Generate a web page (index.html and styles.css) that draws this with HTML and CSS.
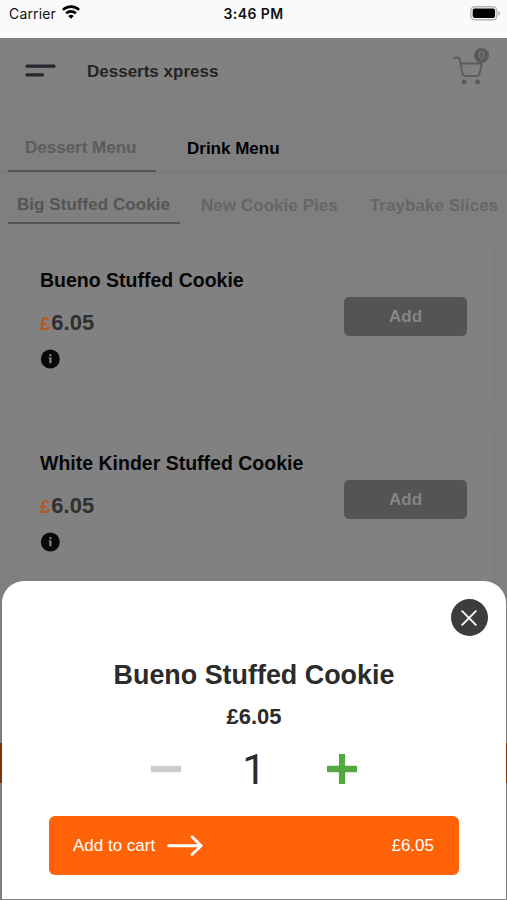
FILE: index.html
```
<!DOCTYPE html>
<html lang="en">
<head>
    <meta charset="UTF-8">
    <title>Desserts xpress</title>
    <link rel="stylesheet" href="styles.css">
</head>
<body>
    <div class="statusbar">
        <div class="carrier">
            <span>Carrier</span>
            <svg width="18" height="14" viewBox="0 0 18 14" fill="none" stroke="#000" stroke-width="2.7">
                <path d="M.9 4.9a11.6 11.6 0 0 1 16.2 0"/>
                <path d="M4.1 8.4a7 7 0 0 1 9.8 0"/>
                <path d="M9 13.8 6.200 11a4 4 0 0 1 5.600 0z" fill="#000" stroke="none"/>
            </svg>
        </div>
        <div class="clock">3:46 PM</div>
        <svg class="battery" width="31" height="15" viewBox="0 0 31 15">
            <rect x=".8" y=".8" width="26" height="13" rx="3.8" fill="#fafafa" stroke="#b5b5b5" stroke-width="1.4"/>
            <rect x="2.7" y="2.6" width="22.4" height="9.4" rx="2" fill="#000"/>
            <path d="M28.3 4.8c2.4 1 2.4 4 0 5z" fill="#b5b5b5"/>
        </svg>
    </div>

    <div class="header">
        <svg class="menu-icon" width="31" height="14" viewBox="0 0 31 14" stroke="#26272e" stroke-width="3.2" stroke-linecap="round">
            <path d="M2 2.2h27M2 10.9h15.500"/>
        </svg>
        <h1>Desserts xpress</h1>
        <div class="cart">
            <svg width="30" height="30" viewBox="0 0 30 30" fill="none" stroke="#5c5c5c" stroke-width="1.900" stroke-linecap="round" stroke-linejoin="round">
                <path d="M1.200 1.700h3.800q1.200 0 1.500 1.200l3.200 15.200q.4 1.900 2.300 1.900h12.300q1.800 0 2.200-1.900l2.200-10.600H7.500"/>
                <circle cx="11.200" cy="26" r="2.500" fill="#5c5c5c" stroke="none"/>
                <circle cx="24.500" cy="26" r="2.500" fill="#5c5c5c" stroke="none"/>
            </svg>
            <span class="badge">0</span>
        </div>
    </div>

    <div class="menus">
        <div class="menu active">Dessert Menu</div>
        <div class="menu">Drink Menu</div>
    </div>
    <div class="categories">
        <div class="category active">Big Stuffed Cookie</div>
        <div class="category">New Cookie Pies</div>
        <div class="category">Traybake Slices</div>
    </div>

    <div class="list">
        <div class="card">
            <div>
                <h2>Bueno Stuffed Cookie</h2>
                <p class="price"><span>£</span>6.05</p>
                <svg class="info" width="20" height="20" viewBox="0 0 20 20">
                    <circle cx="10.300" cy="10" r="9.500" fill="#080808"/>
                    <path d="M9.300 5.300h2.200v2H9.300zM8.700 8.600h2.800v5.700H9.300V9.800h-.6z" fill="#858585"/>
                </svg>
            </div>
            <button class="add">Add</button>
        </div>
        <div class="card">
            <div>
                <h2>White Kinder Stuffed Cookie</h2>
                <p class="price"><span>£</span>6.05</p>
                <svg class="info" width="20" height="20" viewBox="0 0 20 20">
                    <circle cx="10.300" cy="10" r="9.500" fill="#080808"/>
                    <path d="M9.300 5.300h2.200v2H9.300zM8.700 8.600h2.800v5.700H9.300V9.800h-.6z" fill="#858585"/>
                </svg>
            </div>
            <button class="add">Add</button>
        </div>
    </div>
    <div class="cartbar"></div>

    <div class="sheet">
        <button class="close">
            <svg width="16" height="16" viewBox="0 0 16 16" stroke="#fff" stroke-width="1.900" stroke-linecap="round">
                <path d="M1.200 1.200l13.600 13.600M14.800 1.200L1.200 14.800"/>
            </svg>
        </button>
        <h3>Bueno Stuffed Cookie</h3>
        <p class="sheet-price">£6.05</p>
        <div class="counter">
            <svg width="30" height="30" viewBox="0 0 30 30"><path d="M0 11.800h30v6.400H0z" fill="#cbcbcd"/></svg>
            <span class="amount">1</span>
            <svg width="30" height="30" viewBox="0 0 30 30"><path d="M11.900 0h6.200v11.800H30v6.400H18.100V30h-6.200V18.200H0v-6.400h11.900z" fill="#55a83f"/></svg>
        </div>
        <button class="add-to-cart">
            <span>Add to cart</span>
            <svg width="36" height="22" viewBox="0 0 36 22" fill="none" stroke="#fff" stroke-width="2.900" stroke-linecap="round" stroke-linejoin="round">
                <path d="M1.800 10.700H34M25 1.800l9.200 8.900-9.200 8.800"/>
            </svg>
            <span class="total">£6.05</span>
        </button>
    </div>
</body>
</html>
```
FILE: styles.css
```
* {
    box-sizing: border-box;
}

body {
    position: relative;
    margin: 0;
    width: 507px;
    height: 900px;
    overflow: hidden;
    background: #7f7f7f;
    font-family: "Liberation Sans", Arial, sans-serif;
}

h1, h2, h3, p {
    margin: 0;
}

button {
    border: none;
    padding: 0;
    font-family: inherit;
}

svg {
    display: block;
    flex: none;
}

/* status bar */
.statusbar {
    display: grid;
    grid-template-columns: 1fr auto 1fr;
    height: 38px;
    padding: 5px 6px 0 9px;
    background: #fafafa;
    font-family: Inter, sans-serif;
    font-size: 14px;
    line-height: 17px;
    color: #111;
}

.carrier {
    display: flex;
    gap: 6px;
    letter-spacing: 0.15px;
}

.clock {
    margin-right: 3px;
    font-weight: 600;
    letter-spacing: 0.4px;
}

.battery {
    justify-self: end;
    margin-top: 1px;
}

/* header */
.header {
    display: flex;
    align-items: center;
    height: 68px;
    padding: 0 17px 2px 25px;
    background: #818181;
    border-bottom: 1px solid #7d7d7d;
}

.header h1 {
    margin: 2px 0 0 31px;
    font-size: 17px;
    color: #242424;
}

.cart {
    position: relative;
    margin-left: auto;
    padding-right: 7px;
}

.badge {
    position: absolute;
    top: -8px;
    right: 1px;
    width: 15px;
    height: 15px;
    border-radius: 50%;
    background: #5a5a5a;
    color: #7d7d7d;
    font-size: 11px;
    line-height: 15px;
    text-align: center;
}

/* tabs */
.menus {
    display: flex;
    gap: 31px;
    height: 67px;
    padding: 31px 8px 0;
    border-bottom: 1px solid #757575;
}

.menu {
    height: 35px;
    padding-top: 2px;
    font-size: 17px;
    font-weight: bold;
    line-height: 20px;
    color: #000;
}

.menu.active {
    width: 148px;
    padding: 1px 0 0 17px;
    border-bottom: 2px solid #555;
    color: #5c5c5c;
}

.categories {
    display: flex;
    height: 68px;
    padding: 19px 8px 0;
}

.category {
    flex: none;
    height: 32px;
    padding: 4px 0 0;
    margin-right: 32px;
    font-size: 17px;
    font-weight: bold;
    line-height: 20px;
    letter-spacing: 0.05px;
    white-space: nowrap;
    color: #666;
}

.category.active {
    width: 172px;
    margin-right: 21px;
    padding: 3px 0 0 9px;
    border-bottom: 2px solid #555;
    color: #555;
}

/* products */
.list {
    display: flex;
    flex-direction: column;
    gap: 20px;
    padding: 0 15px 0 16px;
}

.card {
    display: flex;
    justify-content: space-between;
    height: 163px;
    padding: 28px 25px 0 24px;
    border-radius: 10px;
    background: #818181;
}

.card h2 {
    font-size: 19.5px;
    line-height: 22px;
    color: #060606;
}

.price {
    margin-top: 19px;
    font-size: 22px;
    font-weight: bold;
    line-height: 26px;
    color: #303030;
}

.price span {
    margin-right: 1px;
    font-size: 18.5px;
    color: #b9581c;
}

.info {
    margin-top: 12px;
}

.add {
    width: 123px;
    height: 39px;
    margin-top: 28px;
    border-radius: 5px;
    background: #565354;
    color: #858585;
    font-size: 17px;
    font-weight: bold;
}

.cartbar {
    height: 40px;
    margin-top: 156px;
    background: #803105;
}

/* bottom sheet */
.sheet {
    position: absolute;
    left: 2px;
    right: 1px;
    top: 581px;
    bottom: 1px;
    display: flex;
    flex-direction: column;
    align-items: center;
    padding-top: 18px;
    border-radius: 22px 22px 0 0;
    background: #fff;
    color: #2b2b2b;
}

.close {
    display: flex;
    align-items: center;
    justify-content: center;
    align-self: flex-end;
    width: 37px;
    height: 37px;
    margin-right: 18.5px;
    border-radius: 50%;
    background: #3c3c3c;
}

.sheet h3 {
    margin-top: 23px;
    font-size: 26.9px;
    line-height: 32px;
}

.sheet-price {
    margin-top: 13px;
    font-size: 22px;
    font-weight: bold;
    line-height: 26px;
}

.counter {
    display: flex;
    align-items: center;
    height: 48px;
    margin-top: 15px;
}

.amount {
    width: 146px;
    font-family: Roboto, sans-serif;
    font-size: 42px;
    text-align: center;
}

.add-to-cart {
    display: flex;
    align-items: center;
    width: 410px;
    height: 59px;
    margin-top: 23px;
    padding: 0 25px 0 24px;
    border-radius: 6px;
    background: #ff6207;
    color: #fff;
    font-size: 17px;
}

.add-to-cart svg {
    margin-left: 12px;
}

.total {
    margin-left: auto;
}
```
